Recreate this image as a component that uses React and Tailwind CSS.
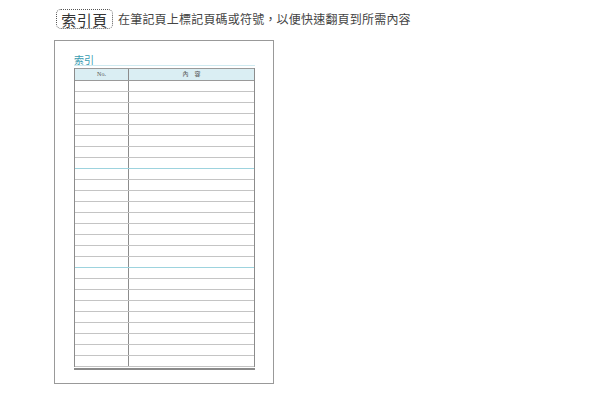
const rows = Array.from({ length: 26 }, (_, i) => i + 1);

function IndexRow({ n }) {
  // 第 8 與第 17 列下緣是藍線
  const blue = n === 8 || n === 17;
  return (
    <div
      className={`flex h-[11px] border-b ${
        blue ? "border-[#9dd3de]" : "border-[#c4c4c4]"
      }`}
    >
      <div className="w-[54px] border-r border-[#8c8c8c]" />
      <div className="flex-1" />
    </div>
  );
}

export default function App() {
  return (
    <div
      className="w-[600px] h-[394px] bg-white overflow-hidden"
      style={{ fontFamily: '"Noto Sans CJK TC", "Noto Sans", sans-serif' }}
    >
      {/* 標題列 */}
      <div className="flex items-center pt-[9px] pl-[56px] gap-[5px]">
        <div className="h-[20px] w-[57px] rounded-[5px] border border-dotted border-[#555] flex items-center justify-center text-[15px] leading-none text-[#333] tracking-[0.5px]">
          索引頁
        </div>
        <div className="text-[12px] leading-none text-[#444] tracking-[0.2px]">
          在筆記頁上標記頁碼或符號，以便快速翻頁到所需內容
        </div>
      </div>

      {/* 頁面預覽 */}
      <div className="ml-[54px] mt-[11px] w-[220px] h-[344px] border border-[#999] pl-[19px] pt-[13px]">
        <div className="h-[11px] text-[10px] leading-[11px] text-[#3a9cb1]">索引</div>
        <div className="w-[181px] h-px bg-[#cfeaf0]" />
        <div className="w-[181px] mt-[2px] border-l border-r border-[#8c8c8c]">
          <div
            className="flex h-[13px] border-t border-b border-[#9a9a9a] bg-[#daeef3] text-[6px] leading-[11px] text-[#555]"
            style={{ fontFamily: '"Liberation Serif", "Noto Sans CJK TC", serif' }}
          >
            <div className="w-[54px] border-r border-[#8c8c8c] text-center">No.</div>
            <div className="flex-1 text-center">內　容</div>
          </div>
          {rows.map((n) => (
            <IndexRow key={n} n={n} />
          ))}
        </div>
        <div className="w-[181px] mt-[1px] h-[2px] bg-[#8a8a8a]" />
      </div>
    </div>
  );
}
